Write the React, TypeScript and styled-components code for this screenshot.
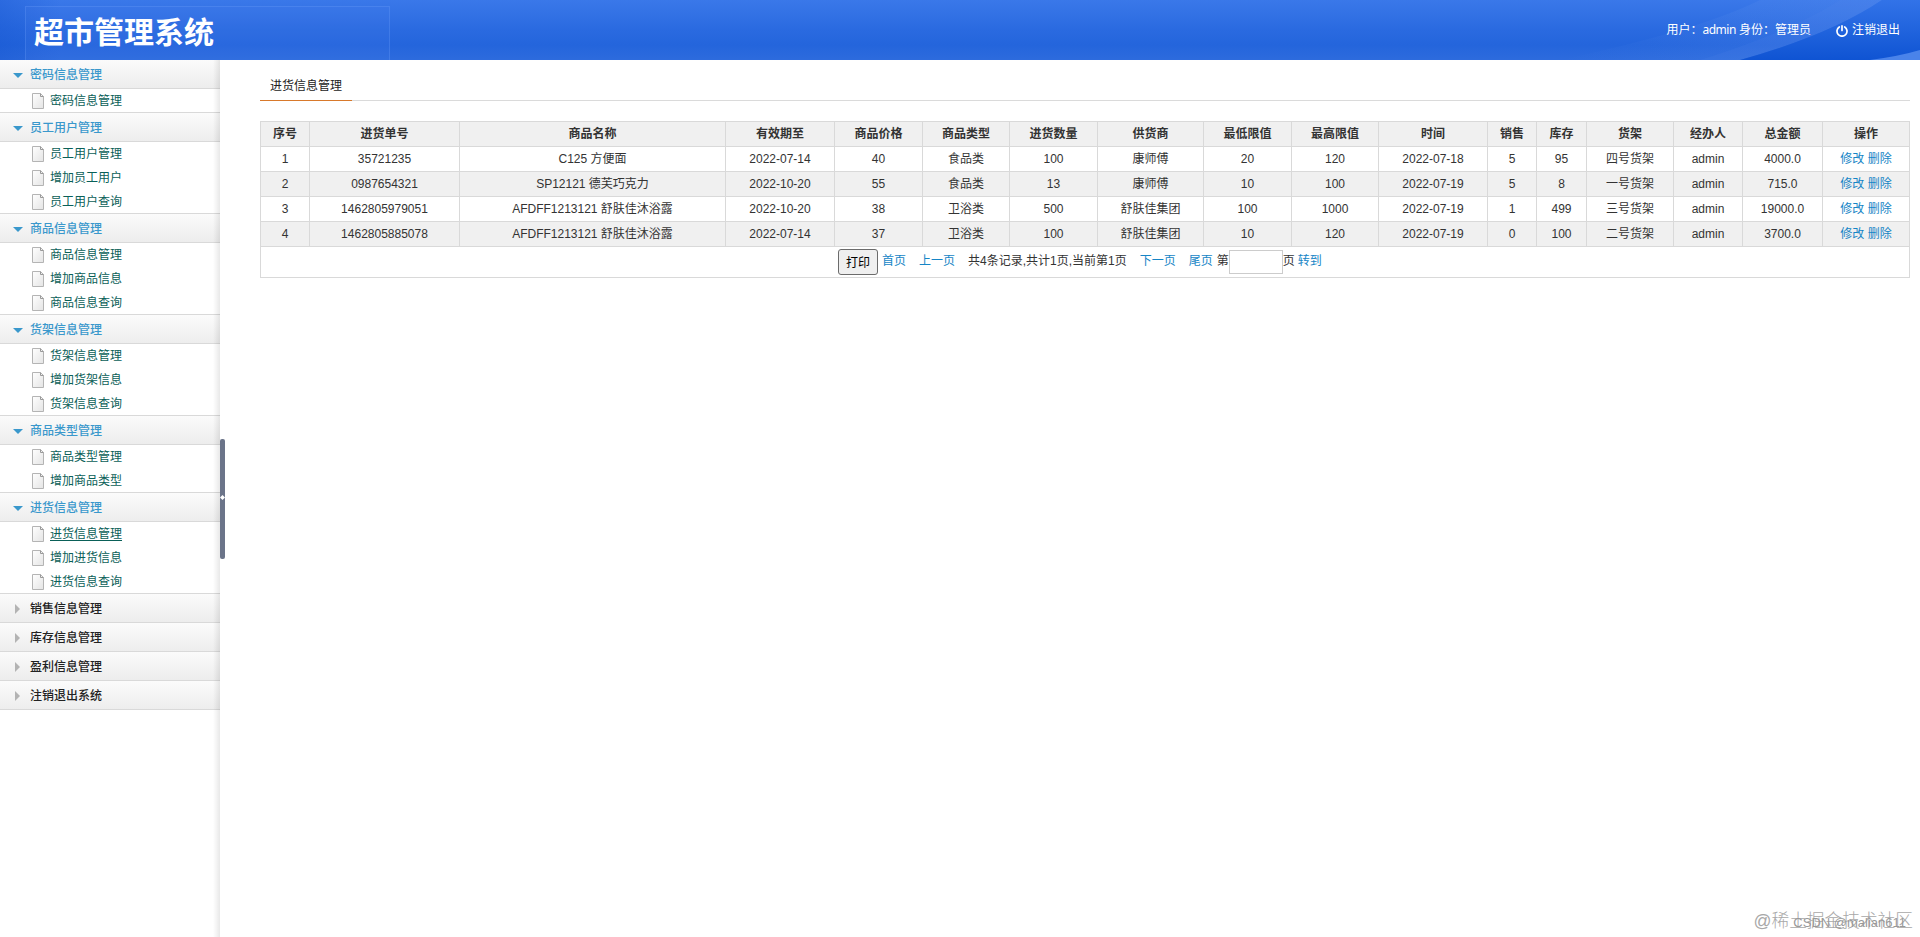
import React from "react";
import styled, { createGlobalStyle } from "styled-components";

const Global = createGlobalStyle`
  * { box-sizing: border-box; }
  body { margin: 0; background: #fff; color: #333; font: 12px/24px "Liberation Sans", "Noto Sans CJK SC", sans-serif; overflow: hidden; }
  a { color: #1685c6; text-decoration: none; }
  ul { list-style: none; margin: 0; padding: 0; }
`;

const Page = styled.div`
  position: relative;
  height: 937px;
  display: flex;
  flex-direction: column;
`;
const Header = styled.header`
  position: relative;
  height: 60px;
  flex: none;
  display: flex;
  justify-content: space-between;
  padding: 6px 20px 0 25px;
  background: linear-gradient(180deg, #3a78e9 0%, #2a6ae0 50%, #2465dc 75%, #2d6bdd 100%);
`;
const Waves = styled.svg`
  position: absolute;
  inset: 0;
  width: 1920px;
  height: 60px;
`;
const Brand = styled.h1`
  position: relative;
  width: 365px;
  height: 54px;
  margin: 0;
  padding-left: 8px;
  border: 1px solid rgba(110, 160, 250, 0.28);
  border-bottom: 0;
  background: rgba(80, 130, 235, 0.12);
  color: #fff;
  font-size: 30px;
  line-height: 52px;
  font-weight: 700;
`;
const UserBar = styled.div`
  position: relative;
  display: flex;
  align-items: center;
  height: 48px;
  color: #fff;
  font-family: "Noto Sans", "Noto Sans CJK SC", sans-serif;
  white-space: pre;
`;
const UserName = styled.span`
  letter-spacing: -0.5px;
`;
const Logout = styled.span`
  display: flex;
  align-items: center;
  gap: 4px;
  margin-left: 25px;
  svg { margin-top: 2px; }
`;

const Body = styled.div`
  flex: 1;
  display: flex;
  min-height: 0;
`;
const Sidebar = styled.nav`
  position: relative;
  width: 220px;
  flex: none;
  &::after {
    content: "";
    position: absolute;
    inset: 0 0 0 auto;
    width: 7px;
    background: linear-gradient(90deg, rgba(0, 0, 0, 0), rgba(0, 0, 0, 0.09));
  }
`;
const GroupTitle = styled.div<{ $open: boolean }>`
  display: flex;
  align-items: center;
  height: 29px;
  padding: 1px 0 0 13px;
  border-bottom: 1px solid #d9d9d9;
  background: linear-gradient(#fbfbfb, #ededed);
  color: ${(p) => (p.$open ? "#3a98cc" : "#222")};
  font-weight: 500;
`;
const Arrow = styled.span<{ $open: boolean }>`
  width: 17px;
  height: 9px;
  display: flex;
  align-items: center;
  &::before {
    content: "";
    border: solid transparent;
    ${(p) =>
      p.$open
        ? "border-width: 5px 5px 0; border-top-color: #3a98cc; margin-top: 2px;"
        : "border-width: 5px 0 5px 5px; border-left-color: #b3b3b3; margin-left: 2px;"}
  }
`;
const SubList = styled.ul`
  border-bottom: 1px solid #d9d9d9;
`;
const SubItem = styled.li<{ $active: boolean }>`
  display: flex;
  align-items: center;
  gap: 6px;
  height: 24px;
  padding-left: 32px;
  color: #0a6058;
  text-decoration: ${(p) => (p.$active ? "underline" : "none")};
  text-underline-offset: 2px;
  &:last-child { height: 23px; }
  svg { flex: none; }
`;
const Splitter = styled.div`
  width: 5px;
  height: 120px;
  align-self: center;
  flex: none;
  display: flex;
  align-items: center;
  justify-content: center;
  padding-bottom: 3px;
  border-radius: 2px;
  background: #6b7489;
`;

const Content = styled.main`
  flex: 1;
  padding: 14px 10px 0 35px;
`;
const TabBar = styled.div`
  display: flex;
  height: 27px;
  margin-bottom: 20px;
  border-bottom: 1px solid #dadada;
`;
const Tab = styled.div`
  width: 92px;
  height: 27px;
  border-bottom: 1px solid #d8792b;
  color: #222;
  text-align: center;
`;
const Table = styled.table`
  width: 1650px;
  table-layout: fixed;
  border-collapse: separate;
  border-spacing: 0;
  border: solid #d9d9d9;
  border-width: 1px 0 0 1px;
  text-align: center;
`;
const Row = styled.tr<{ $shade?: boolean }>`
  background: ${(p) => (p.$shade ? "#f0f0f0" : "#fff")};
`;
const Th = styled.th`
  height: 25px;
  padding: 0;
  border: solid #d9d9d9;
  border-width: 0 1px 1px 0;
`;
const Td = styled.td`
  height: 25px;
  padding: 0;
  border: solid #d9d9d9;
  border-width: 0 1px 1px 0;
  white-space: pre;
`;
const Pager = styled.div`
  display: flex;
  align-items: center;
  height: 30px;
  padding-left: 577px;
  line-height: 20px;
  white-space: pre;
`;
const PageLink = styled.a<{ $gap: number }>`
  margin: 0 0 2px ${(p) => p.$gap}px;
`;
const PagerText = styled.span<{ $gap: number }>`
  margin: 0 0 2px ${(p) => p.$gap}px;
`;
const PrintButton = styled.button`
  width: 40px;
  height: 26px;
  padding: 0 0 2px;
  border: 1px solid #6b6b6b;
  border-radius: 3px;
  background: #efefef;
  color: #000;
  font: 12px "Liberation Sans", "Noto Sans CJK SC", sans-serif;
`;
const PageInput = styled.input`
  width: 54px;
  height: 24px;
  border: 1px solid #ccc;
  background: #fff;
`;
const Watermark = styled.div`
  position: absolute;
  right: 7px;
  bottom: 4px;
  color: #a8a8a8;
  font-size: 17.7px;
  font-weight: 300;
`;
const SmallMark = styled.div`
  position: absolute;
  right: 14px;
  bottom: 2px;
  color: #999;
  font-size: 13px;
`;

const groups: [string, string[]][] = [
  ["密码信息管理", ["密码信息管理"]],
  ["员工用户管理", ["员工用户管理", "增加员工用户", "员工用户查询"]],
  ["商品信息管理", ["商品信息管理", "增加商品信息", "商品信息查询"]],
  ["货架信息管理", ["货架信息管理", "增加货架信息", "货架信息查询"]],
  ["商品类型管理", ["商品类型管理", "增加商品类型"]],
  ["进货信息管理", ["进货信息管理", "增加进货信息", "进货信息查询"]],
  ["销售信息管理", []],
  ["库存信息管理", []],
  ["盈利信息管理", []],
  ["注销退出系统", []],
];

const columns: [string, number][] = [
  ["序号", 49], ["进货单号", 150], ["商品名称", 266], ["有效期至", 109], ["商品价格", 88],
  ["商品类型", 87], ["进货数量", 88], ["供货商", 106], ["最低限值", 88], ["最高限值", 87],
  ["时间", 109], ["销售", 49], ["库存", 50], ["货架", 87], ["经办人", 69], ["总金额", 80], ["操作", 87],
];

const rows = [
  ["1", "35721235", "C125 方便面", "2022-07-14", "40", "食品类", "100", "康师傅", "20", "120", "2022-07-18", "5", "95", "四号货架", "admin", "4000.0"],
  ["2", "0987654321", "SP12121 德芙巧克力", "2022-10-20", "55", "食品类", "13", "康师傅", "10", "100", "2022-07-19", "5", "8", "一号货架", "admin", "715.0"],
  ["3", "1462805979051", "AFDFF1213121 舒肤佳沐浴露", "2022-10-20", "38", "卫浴类", "500", "舒肤佳集团", "100", "1000", "2022-07-19", "1", "499", "三号货架", "admin", "19000.0"],
  ["4", "1462805885078", "AFDFF1213121 舒肤佳沐浴露", "2022-07-14", "37", "卫浴类", "100", "舒肤佳集团", "10", "120", "2022-07-19", "0", "100", "二号货架", "admin", "3700.0"],
];

const FileIcon = () => (
  <svg width="12" height="16" viewBox="0 0 12 16">
    <defs>
      <linearGradient id="sheet" x1="0" y1="0" x2="1" y2="1">
        <stop offset="0" stopColor="#fff" />
        <stop offset="1" stopColor="#e4e4e4" />
      </linearGradient>
    </defs>
    <path d="M.5 .5H8.5L11.5 3.5V15.5H.5Z" fill="url(#sheet)" stroke="#b4b4b4" />
    <path d="M8.5 .5V3.5H11.5" fill="none" stroke="#999" />
  </svg>
);

export default function App() {
  return (
    <Page>
      <Global />
      <Header>
        <Waves viewBox="0 0 1920 60">
          <defs>
            <linearGradient id="edge" x1="0" x2="1">
              <stop offset="0" stopColor="#1555d0" stopOpacity=".4" />
              <stop offset="1" stopColor="#1555d0" stopOpacity="0" />
            </linearGradient>
            <linearGradient id="deep" x1="0" y1="0" x2="0" y2="1">
              <stop offset="0" stopColor="#3273e8" />
              <stop offset="1" stopColor="#0f54d3" />
            </linearGradient>
            <linearGradient id="shine" x1="0" x2="1">
              <stop offset="0" stopColor="#6a9af0" stopOpacity="0" />
              <stop offset="1" stopColor="#6a9af0" stopOpacity=".22" />
            </linearGradient>
          </defs>
          <rect width="60" height="60" fill="url(#edge)" />
          <path d="M1560 60Q1700 30 1760 0H1882Q1830 35 1740 60Z" fill="url(#shine)" />
          <path d="M1700 60Q1790 32 1840 0H1882Q1830 35 1740 60Z" fill="#5b8fee" fillOpacity=".12" />
          <path d="M1740 60Q1830 35 1882 0H1920V60Z" fill="url(#deep)" />
          <path d="M1870 60Q1900 56 1920 50V60Z" fill="#4a83ea" />
        </Waves>
        <Brand>超市管理系统</Brand>
        <UserBar>
          用户：<UserName>admin</UserName> 身份：管理员
          <Logout>
            <svg width="12" height="12" viewBox="0 0 12 12" fill="none" stroke="#fff" strokeWidth="1.7" strokeLinecap="round">
              <path d="M3.3 2A5 5 0 1 0 8.7 2M6 .9V5.4" />
            </svg>
            注销退出
          </Logout>
        </UserBar>
      </Header>
      <Body>
        <Sidebar>
          {groups.map(([title, items]) => (
            <div key={title}>
              <GroupTitle $open={items.length > 0}>
                <Arrow $open={items.length > 0} />
                {title}
              </GroupTitle>
              {items.length > 0 && (
                <SubList>
                  {items.map((item) => (
                    <SubItem key={item} $active={item === "进货信息管理"}>
                      <FileIcon />
                      {item}
                    </SubItem>
                  ))}
                </SubList>
              )}
            </div>
          ))}
        </Sidebar>
        <Splitter>
          <svg width="5" height="5" viewBox="0 0 5 5"><path d="M2.5 0L5 2.5L2.5 5L0 2.5Z" fill="#fff" /></svg>
        </Splitter>
        <Content>
          <TabBar><Tab>进货信息管理</Tab></TabBar>
          <Table>
            <colgroup>
              {columns.map(([name, width]) => <col key={name} width={width} />)}
            </colgroup>
            <thead>
              <Row $shade>{columns.map(([name]) => <Th key={name}>{name}</Th>)}</Row>
            </thead>
            <tbody>
              {rows.map((row, i) => (
                <Row key={row[0]} $shade={i % 2 === 1}>
                  {row.map((cell, j) => <Td key={j}>{cell}</Td>)}
                  <Td><a>修改</a> <a>删除</a></Td>
                </Row>
              ))}
              <Row>
                <Td colSpan={17}>
                  <Pager>
                    <PrintButton>打印</PrintButton>
                    <PageLink $gap={4}>首页</PageLink>
                    <PageLink $gap={13}>上一页</PageLink>
                    <PagerText $gap={13}>共4条记录,共计1页,当前第1页</PagerText>
                    <PageLink $gap={13}>下一页</PageLink>
                    <PageLink $gap={13}>尾页</PageLink>
                    <PagerText $gap={4}>第</PagerText>
                    <PageInput />
                    <PagerText $gap={0}>页</PagerText>
                    <PageLink $gap={3}>转到</PageLink>
                  </Pager>
                </Td>
              </Row>
            </tbody>
          </Table>
        </Content>
      </Body>
      <Watermark>@稀土掘金技术社区</Watermark>
      <SmallMark>CSDN @malian611</SmallMark>
    </Page>
  );
}
